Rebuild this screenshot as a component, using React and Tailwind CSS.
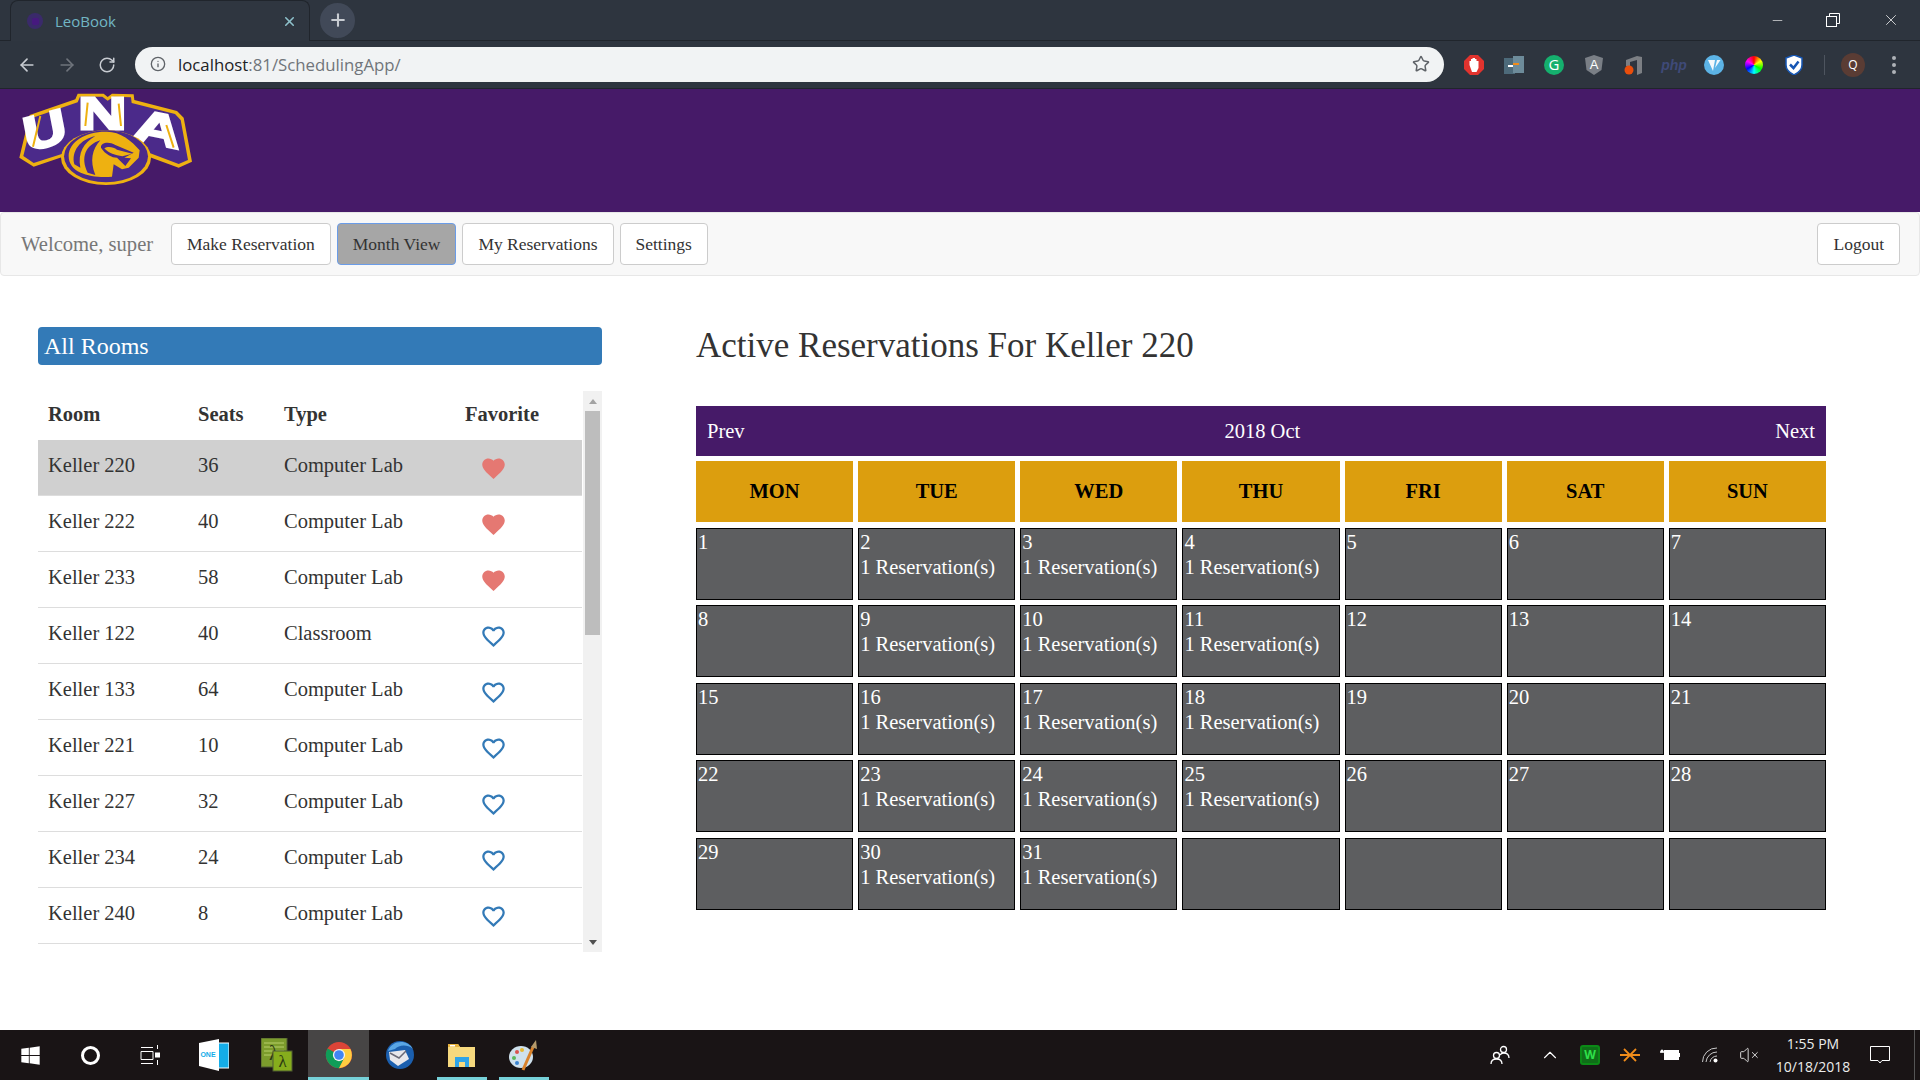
import { ArrowLeft, ArrowRight, RotateCw, Info, Star, X, Plus, Minus, ChevronUp, VolumeX } from "lucide-react";
import { MdFavorite, MdFavoriteBorder } from "react-icons/md";
import { FaWindows } from "react-icons/fa";

const rooms = [
  { name: "Keller 220", seats: 36, type: "Computer Lab", fav: true, active: true },
  { name: "Keller 222", seats: 40, type: "Computer Lab", fav: true },
  { name: "Keller 233", seats: 58, type: "Computer Lab", fav: true },
  { name: "Keller 122", seats: 40, type: "Classroom" },
  { name: "Keller 133", seats: 64, type: "Computer Lab" },
  { name: "Keller 221", seats: 10, type: "Computer Lab" },
  { name: "Keller 227", seats: 32, type: "Computer Lab" },
  { name: "Keller 234", seats: 24, type: "Computer Lab" },
  { name: "Keller 240", seats: 8, type: "Computer Lab" },
];

const days = ["MON", "TUE", "WED", "THU", "FRI", "SAT", "SUN"];
const busyDays = [2, 3, 4, 9, 10, 11, 16, 17, 18, 23, 24, 25, 30, 31];
const cells = Array.from({ length: 35 }, (_, i) => (i < 31 ? i + 1 : null));

// coordinates follow a 3x crop of the logo
function Logo() {
  return (
    <svg viewBox="57 270 520 285" className="w-[174px] h-[95px] block overflow-visible">
      <path d="M57 470 L88 342 L225 295 L232 278 L310 278 L322 288 L335 278 L400 280 L402 297 L530 330 L550 350 L575 482 L535 500 L447 468 L186 468 L100 497 Z" fill="#eeb111" />
      <path d="M69 465 L97 350 L232 304 L239 287 L306 287 L322 299 L340 287 L392 289 L394 306 L524 339 L541 357 L563 477 L535 489 L438 452 L196 455 L100 486 Z" fill="#4b2a8a" />
      <g fill="#ffffff" stroke="#ffffff" strokeWidth="8" fontFamily="'Liberation Sans', sans-serif" fontWeight="700">
        <text x="0" y="0" fontSize="150" transform="translate(80 452) rotate(-15) skewX(-4) scale(1.2 .95)">U</text>
        <text x="0" y="0" fontSize="125" transform="translate(234 384) scale(1.6 1.05)">N</text>
        <text x="0" y="0" fontSize="150" transform="translate(392 414) rotate(12) scale(1.35 .9)">A</text>
      </g>
      <path d="M98 437 L120 345 M255 375 L262 305 M362 375 L355 308 M520 440 L498 372" stroke="#eeb111" strokeWidth="6" fill="none" />
      <ellipse cx="317" cy="470" rx="135" ry="82" fill="#eeb111" />
      <ellipse cx="317" cy="466" rx="126" ry="78" fill="#4b2a8a" />
      <path d="M205 465 C205 420 260 390 320 392 C360 392 395 420 418 448 L415 470 L385 500 L365 505 L340 490 L335 527 C280 532 205 520 205 465 Z" fill="#eeb111" />
      <path d="M222 490 C212 450 240 415 285 405 C250 425 232 455 240 500 Z M262 515 C240 470 255 432 300 418 C275 445 268 480 285 522 Z M302 440 C300 425 325 420 345 432 L400 455 L372 470 L392 472 L375 495 L350 470 C335 470 315 460 302 440 Z" fill="#4b2a8a" />
      <path d="M312 442 C322 435 340 438 350 446 L396 458 L366 466 C345 462 325 458 312 442 Z" fill="#eeb111" />
    </svg>
  );
}

function ChromeMark() {
  return (
    <svg viewBox="0 0 32 32" className="w-[28px] h-[28px]">
      <circle cx="16" cy="16" r="15" fill="#db4437" />
      <path d="M16 16 L3 8.5 A15 15 0 0 0 16 31 L23 18 Z" fill="#0f9d58" />
      <path d="M16 9 L29 9 A15 15 0 0 1 16 31 L22 19 Z" fill="#ffcd40" />
      <circle cx="16" cy="16" r="7" fill="#f1f3f4" />
      <circle cx="16" cy="16" r="5.5" fill="#4285f4" />
    </svg>
  );
}

function BrowserChrome() {
  return (
    <div className="bg-[#2e353f] text-[#c8ccd2] shrink-0 font-['Open_Sans',sans-serif]">
      <div className="h-[41px] flex items-center border-b border-[#20252c]">
        <div className="ml-[10px] w-[300px] h-[41px] -mb-px rounded-t-[8px] border border-b-0 border-[#20252c] bg-[#2f3640] flex items-center pl-[16px] pr-[12px]">
          <span className="w-[16px] h-[16px] rounded-full bg-[#3a2a6a] flex items-center justify-center">
            <span className="w-[7px] h-[7px] bg-[#46197e] rounded-[2px]" />
          </span>
          <span className="ml-[12px] text-[15px] text-[#72b6c4] flex-1">LeoBook</span>
          <X size={15} strokeWidth={2.5} className="text-[#8ec2cc]" />
        </div>
        <div className="ml-[10px] w-[35px] h-[35px] rounded-full bg-[#414958] flex items-center justify-center">
          <Plus size={20} strokeWidth={2.5} className="text-[#c8ccd2]" />
        </div>
        <div className="ml-auto mr-px flex items-center text-white">
          <div className="w-[56px] flex justify-center"><Minus size={15} strokeWidth={1} /></div>
          <div className="w-[56px] mr-[2px] flex justify-center">
            <svg viewBox="0 0 14 14" className="w-[14px] h-[14px]" fill="none" stroke="#fff"><rect x="0.5" y="3.5" width="10" height="10" /><path d="M3.5 3.5 V0.5 H13.5 V10.5 H10.5" /></svg>
          </div>
          <div className="w-[56px] flex justify-center"><X size={18} strokeWidth={1} /></div>
        </div>
      </div>
      <div className="h-[48px] flex items-center border-b border-[#20252c]">
        <div className="w-[135px] flex items-center pl-[7px]">
          <div className="w-[40px] flex justify-center"><ArrowLeft size={20} className="text-[#c8ccd2]" /></div>
          <div className="w-[40px] flex justify-center"><ArrowRight size={20} className="text-[#6f747c]" /></div>
          <div className="w-[40px] flex justify-center"><RotateCw size={18} className="text-[#c8ccd2]" /></div>
        </div>
        <div className="w-[1309px] h-[35px] rounded-full bg-[#f1f3f4] flex items-center pl-[15px] pr-[14px] mt-[-1px]">
          <Info size={16} className="text-[#5f6368]" />
          <span className="ml-[12px] pt-[2px] text-[16.8px] text-[#202124] flex-1 leading-none">localhost<span className="text-[#70757a]">:81/SchedulingApp/</span></span>
          <Star size={18} className="text-[#5f6368]" />
        </div>
        <div className="flex items-center ml-[10px]">
          <ExtSlot>
            <svg viewBox="0 0 20 20" className="w-[20px] h-[20px]"><path d="M6 0 H14 L20 6 V14 L14 20 H6 L0 14 V6 Z" fill="#e2332e" /><path d="M5.5 10 V6 H7 V4 H8.5 V3 H11 V4 H12.5 V6 H14.5 V13 L12.5 17 H8 Z" fill="#fff" /></svg>
          </ExtSlot>
          <ExtSlot>
            <svg viewBox="0 0 20 20" className="w-[20px] h-[20px]"><rect x="0" y="3" width="11" height="16" fill="#4d6a7a" /><rect x="9" y="1" width="11" height="17" fill="#6d8b9a" /><path d="M4 11 H9" stroke="#fff" strokeWidth="2" /><path d="M9 9 H15" stroke="#f08c1a" strokeWidth="2" /></svg>
          </ExtSlot>
          <ExtSlot>
            <span className="w-[20px] h-[20px] rounded-full bg-[#15b06e] text-white text-[15px] flex items-center justify-center leading-none">G</span>
          </ExtSlot>
          <ExtSlot>
            <svg viewBox="0 0 20 20" className="w-[20px] h-[20px]"><path d="M10 0 L19 3 L17.5 15 L10 20 L2.5 15 L1 3 Z" fill="#7a7f86" /><text x="10" y="14" textAnchor="middle" fontSize="13" fill="#fff" fontFamily="'Liberation Sans', sans-serif">A</text></svg>
          </ExtSlot>
          <ExtSlot>
            <svg viewBox="0 0 20 20" className="w-[20px] h-[20px]"><path d="M2 5 L13 1 L18 2 V18 L13 20 V5 L6 7 V11 H2 Z" fill="#7c7f84" /><circle cx="5" cy="15" r="4.5" fill="#ea4e0c" /></svg>
          </ExtSlot>
          <ExtSlot>
            <span className="text-[14px] italic font-bold text-[#3f4a78] font-['Liberation_Sans',sans-serif] leading-none">php</span>
          </ExtSlot>
          <ExtSlot>
            <svg viewBox="0 0 20 20" className="w-[20px] h-[20px]"><circle cx="10" cy="10" r="10" fill="#5cb3e6" /><path d="M4 5 H11 L9 16 Z M13 5 H16.5 L11 13 Z" fill="#f4f8fb" /></svg>
          </ExtSlot>
          <ExtSlot>
            <span className="w-[18px] h-[18px] rounded-full bg-[conic-gradient(#f00,#ff0,#0f0,#0ff,#00f,#f0f,#f00)]" />
          </ExtSlot>
          <ExtSlot>
            <svg viewBox="0 0 20 20" className="w-[20px] h-[20px]"><path d="M10 0 L18 3 V10 C18 15 14 18 10 20 C6 18 2 15 2 10 V3 Z" fill="#fff" stroke="#1656b4" strokeWidth="1.5" /><path d="M6 9.5 L9.5 13 L14.5 6.5" fill="none" stroke="#1656b4" strokeWidth="2.5" /></svg>
          </ExtSlot>
          <div className="w-px h-[20px] bg-[#4e555f] ml-[10px] mr-[9px]" />
          <span className="w-[24px] h-[24px] rounded-full bg-[#5a3c34] text-white text-[12px] flex items-center justify-center ml-[7px]">Q</span>
          <div className="ml-[27px] flex flex-col gap-[3px]">
            <span className="w-[4px] h-[4px] rounded-full bg-[#aeb2b8]" />
            <span className="w-[4px] h-[4px] rounded-full bg-[#aeb2b8]" />
            <span className="w-[4px] h-[4px] rounded-full bg-[#aeb2b8]" />
          </div>
        </div>
      </div>
    </div>
  );
}

function ExtSlot({ children }) {
  return <div className="w-[40px] flex justify-center items-center">{children}</div>;
}

function NavButton({ label, active }) {
  return (
    <button
      type="button"
      className={
        active
          ? "h-[42px] px-[15px] rounded-[4px] border border-[#6a9ce8] bg-[#a6a6a6] text-[17.5px] text-[#333]"
          : "h-[42px] px-[15px] rounded-[4px] border border-[#ccc] bg-white text-[17.5px] text-[#333]"
      }
    >
      {label}
    </button>
  );
}

function RoomList() {
  return (
    <div className="w-[564px]">
      <div className="h-[38px] rounded-[4px] bg-[#337ab7] text-white text-[24px] leading-[38px] px-[6px]">All Rooms</div>
      <div className="mt-[26px] h-[561px] flex overflow-hidden">
        <div className="w-[544px] text-[20.5px] text-[#333]">
          <div className="grid grid-cols-[150px_86px_181px_127px] h-[49px] pb-[3px] items-center font-bold pl-[10px]">
            <span>Room</span>
            <span>Seats</span>
            <span>Type</span>
            <span>Favorite</span>
          </div>
          {rooms.map((room) => (
            <div
              key={room.name}
              className={`grid grid-cols-[150px_86px_181px_127px] h-[56px] items-center pl-[10px] border-b border-[#ddd] ${room.active ? "bg-[#d0d0d0]" : ""}`}
            >
              <span className="pb-[5px]">{room.name}</span>
              <span className="pb-[5px]">{room.seats}</span>
              <span className="pb-[5px]">{room.type}</span>
              <span className="pl-[15px] pt-[2px]">
                {room.fav ? (
                  <MdFavorite size={27} className="text-[#e57872]" />
                ) : (
                  <MdFavoriteBorder size={27} className="text-[#337ab7]" />
                )}
              </span>
            </div>
          ))}
        </div>
        <div className="ml-px w-[19px] bg-[#f1f1f1] flex flex-col items-center">
          <div className="h-[20px] flex items-center justify-center">
            <span className="w-0 h-0 border-x-[4px] border-x-transparent border-b-[5px] border-b-[#a3a3a3]" />
          </div>
          <div className="w-[15px] h-[224px] bg-[#bdbdbd]" />
          <div className="flex-1" />
          <div className="h-[20px] flex items-center justify-center">
            <span className="w-0 h-0 border-x-[4px] border-x-transparent border-t-[5px] border-t-[#505050]" />
          </div>
        </div>
      </div>
    </div>
  );
}

function Calendar() {
  return (
    <div className="w-[1130px]">
      <h2 className="h-[36px] pt-px text-[35px] leading-[36px] text-[#333]">Active Reservations For Keller 220</h2>
      <div className="mt-[43px] h-[50px] bg-[#461a68] text-white text-[20.5px] flex items-center justify-between px-[11px]">
        <span>Prev</span>
        <span className="pl-[5px]">2018 Oct</span>
        <span>Next</span>
      </div>
      <div className="mt-[5px] grid grid-cols-7 gap-x-[5px]">
        {days.map((day) => (
          <div key={day} className="h-[61px] pb-px bg-[#dc9e0e] text-black text-[20.5px] font-bold flex items-center justify-center">{day}</div>
        ))}
      </div>
      <div className="mt-[6px] grid grid-cols-7 gap-x-[5px] gap-y-[5.4px]">
        {cells.map((day, i) => (
          <div key={i} className="h-[72px] border border-black bg-[#5d5e60] text-white text-[20.5px] leading-[25px] px-[1px] pt-[1px]">
            {day}
            {busyDays.includes(day) && <div>1 Reservation(s)</div>}
          </div>
        ))}
      </div>
    </div>
  );
}

function TaskSlot({ children, width, active, open }) {
  return (
    <div className={`${width} h-full relative flex items-center justify-center ${active ? "bg-[#474545]" : ""}`}>
      {children}
      {open && <span className={`absolute bottom-0 h-[3px] bg-[#76d1d8] ${active ? "inset-x-0" : "inset-x-[6px]"}`} />}
    </div>
  );
}

function Taskbar() {
  return (
    <div className="h-[50px] shrink-0 bg-[#191415] flex items-center text-white font-['Open_Sans',sans-serif]">
      <TaskSlot width="w-[60px]"><FaWindows size={21} /></TaskSlot>
      <TaskSlot width="w-[60px]"><span className="w-[19px] h-[19px] rounded-full border-[3px] border-white" /></TaskSlot>
      <TaskSlot width="w-[63px] pr-[3px]">
        <svg viewBox="0 0 20 22" className="w-[20px] h-[22px]" fill="none" stroke="#fff"><path d="M1 3.5 H13 M1 19.5 H13 M1 7.5 H13 V15.5 H1 Z M17.5 1 V5 M17.5 16 V21" /><rect x="15.5" y="9" width="4" height="4" fill="#fff" /></svg>
      </TaskSlot>
      <TaskSlot width="w-[62px]">
        <svg viewBox="0 0 30 34" className="w-[30px] h-[34px]"><rect x="12" y="5" width="18" height="25" fill="#14ade8" stroke="#fff" /><path d="M0 5 L20 1 V33 L0 28 Z" fill="#fff" /><text x="9" y="19" textAnchor="middle" fontSize="7" fontWeight="700" fill="#14ade8" fontFamily="'Liberation Sans', sans-serif">ONE</text></svg>
      </TaskSlot>
      <TaskSlot width="w-[63px]">
        <svg viewBox="0 0 32 34" className="w-[32px] h-[34px]"><rect x="0" y="0" width="26" height="29" fill="#7c9c2c" stroke="#4f5a32" /><path d="M3 5 H23 M3 9 H23 M3 13 H23 M3 17 H23" stroke="#b7cf6a" /><text x="13" y="22" textAnchor="middle" fontSize="21" fill="#2c3a12" fontFamily="'Liberation Serif', serif">λ</text><rect x="12" y="13" width="19" height="20" fill="#86ad1c" stroke="#4f5a32" /><text x="21.5" y="29" textAnchor="middle" fontSize="17" fill="#2c3a12" fontFamily="'Liberation Serif', serif">λ</text></svg>
      </TaskSlot>
      <TaskSlot width="w-[61px]" active open><ChromeMark /></TaskSlot>
      <TaskSlot width="w-[62px]">
        <svg viewBox="0 0 30 32" className="w-[30px] h-[32px]"><circle cx="15" cy="16" r="14" fill="#1b5fae" /><path d="M3 12 C6 2 22 -1 28 10 C22 5 14 6 10 10 Z" fill="#5aa6e4" /><path d="M4 13 L20 11 L24 20 L13 27 L5 21 Z" fill="#e8e8ec" /><path d="M5 14 L14 19 L21 12" fill="none" stroke="#6a6a78" strokeWidth="1.5" /></svg>
      </TaskSlot>
      <TaskSlot width="w-[62px]" open>
        <svg viewBox="0 0 28 26" className="w-[28px] h-[26px]"><path d="M0 2 H10 L12 5 H27 V25 H0 Z" fill="#f6d97e" /><path d="M0 2 H10 L12 5 H0 Z" fill="#e5b23e" /><rect x="2" y="3" width="5" height="1.5" fill="#fff" /><path d="M7 25 V15 H21 V25 H17 V20 H11 V25 Z" fill="#2fa4e7" /></svg>
      </TaskSlot>
      <TaskSlot width="w-[62px]" open>
        <svg viewBox="0 0 30 32" className="w-[30px] h-[32px]"><ellipse cx="12" cy="18" rx="12" ry="11" fill="#cfe1ec" /><circle cx="8" cy="13" r="2" fill="#d9534f" /><circle cx="13" cy="11" r="2" fill="#e8b931" /><circle cx="5" cy="19" r="2" fill="#5cb85c" /><circle cx="8" cy="24" r="2" fill="#3a84d1" /><path d="M14 31 L24 8" stroke="#d9822b" strokeWidth="3" /><path d="M22 8 L27 1 L28 10 Z" fill="#b59a6a" /></svg>
      </TaskSlot>
      <div className="ml-auto flex items-center h-full">
        <div className="w-[40px] flex justify-center">
          <svg viewBox="0 0 20 20" className="w-[20px] h-[20px]" fill="none" stroke="#fff" strokeWidth="1.3"><circle cx="6.5" cy="10.5" r="3" /><path d="M1 19 C1 15.5 3.5 14 6.5 14 C9.5 14 12 15.5 12 19" /><circle cx="13.5" cy="4.5" r="3" /><path d="M10 10 C11 8.5 12 8 13.5 8 C16.5 8 19 9.5 19 13" /></svg>
        </div>
        <div className="w-[40px] ml-[10px] flex justify-center"><ChevronUp size={22} strokeWidth={1.2} /></div>
        <div className="w-[40px] flex justify-center">
          <span className="w-[20px] h-[20px] rounded-[3px] border-2 border-[#0b8a16] bg-[#0f6e18] text-[#2fe04a] text-[12px] font-bold flex items-center justify-center leading-none">W</span>
        </div>
        <div className="w-[40px] flex justify-center">
          <svg viewBox="0 0 20 14" className="w-[20px] h-[14px]" fill="none" stroke="#f08c1a" strokeWidth="1.8"><path d="M0 7 H20 M4 1 L10 7 L4 13 M16 1 L10 7 L16 13" /></svg>
        </div>
        <div className="w-[40px] flex justify-center">
          <svg viewBox="0 0 20 12" className="w-[20px] h-[12px]"><rect x="4.5" y="1.5" width="14" height="9" fill="#fff" stroke="#fff" /><rect x="18.5" y="4" width="1.5" height="4" fill="#fff" /><path d="M0 3 H4" stroke="#fff" strokeWidth="1.5" /><circle cx="2" cy="2" r="1.5" fill="#fff" /></svg>
        </div>
        <div className="w-[40px] flex justify-center">
          <svg viewBox="0 0 16 16" className="w-[16px] h-[16px]" fill="none" stroke="#c8c8c8"><path d="M0.5 15 A14 14 0 0 1 15 1 M4 15 A11 11 0 0 1 15 5 M8 15 A7 7 0 0 1 15 9" /><circle cx="13.5" cy="13.5" r="2" fill="#fff" stroke="none" /></svg>
        </div>
        <div className="w-[38px] flex justify-center"><VolumeX size={20} strokeWidth={1} /></div>
        <div className="w-[90px] flex flex-col items-center text-[14px] leading-[23px] text-[#ececec]">
          <span>1:55 PM</span>
          <span>10/18/2018</span>
        </div>
        <div className="w-[41px] ml-px flex justify-center">
          <svg viewBox="0 0 20 18" className="w-[20px] h-[18px]" fill="none" stroke="#fff"><path d="M0.5 0.5 H19.5 V14.5 H12 L10 17 L8 14.5 H0.5 Z" /></svg>
        </div>
        <div className="w-px h-full ml-[14px] mr-[5px] bg-[#555]" />
      </div>
    </div>
  );
}

export default function App() {
  return (
    <div className="h-screen flex flex-col overflow-hidden bg-white font-['Liberation_Serif',serif]">
      <BrowserChrome />
      <div className="flex-1 flex flex-col min-h-0">
        <header className="h-[123px] shrink-0 bg-[#461a68] pl-[19px] pt-[2px]">
          <Logo />
        </header>
        <nav className="h-[64px] shrink-0 bg-[#f8f8f8] border border-[#e7e7e7] rounded-[4px] flex items-center pl-[20px] pr-[19px]">
          <span className="text-[20.6px] text-[#777] w-[150px]">Welcome, super</span>
          <div className="flex gap-[6px]">
            <NavButton label="Make Reservation" />
            <NavButton label="Month View" active />
            <NavButton label="My Reservations" />
            <NavButton label="Settings" />
          </div>
          <div className="ml-auto"><NavButton label="Logout" /></div>
        </nav>
        <main className="flex-1 flex pl-[38px] pt-[51px] gap-[94px]">
          <RoomList />
          <Calendar />
        </main>
      </div>
      <Taskbar />
    </div>
  );
}
